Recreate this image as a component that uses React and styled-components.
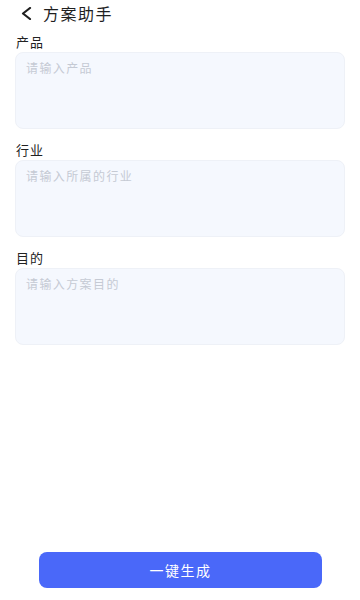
import React, { useState } from 'react';
import styled, { createGlobalStyle } from 'styled-components';

const GlobalStyle = createGlobalStyle`
  * { box-sizing: border-box; }
  html, body {
    margin: 0;
    padding: 0;
    background: #fff;
    font-family: "Noto Sans CJK SC", "Noto Sans", sans-serif;
  }
`;

const Page = styled.div`
  width: 100%;
  height: 100vh;
  display: flex;
  flex-direction: column;
  background: #fff;
`;

const Header = styled.div`
  height: 26px;
  display: flex;
  align-items: center;
  padding-left: 20px;
  gap: 10px;
`;

const BackButton = styled.button`
  border: none;
  background: none;
  padding: 0;
  width: 13px;
  height: 14px;
  display: flex;
  align-items: center;
  justify-content: center;
  cursor: pointer;
`;

const Title = styled.div`
  font-size: 16px;
  color: #1f1f1f;
  letter-spacing: 1.5px;
  line-height: 20px;
`;

const Form = styled.div`
  padding: 5px 15px 0;
  display: flex;
  flex-direction: column;
  gap: 10px;
`;

const Field = styled.div`
  display: flex;
  flex-direction: column;
`;

const Label = styled.label`
  font-size: 13px;
  line-height: 21px;
  color: #222;
  letter-spacing: 1px;
  padding-left: 1px;
`;

const Input = styled.textarea`
  height: 77px;
  width: 100%;
  resize: none;
  border: 1px solid #eef1f7;
  border-radius: 8px;
  background: #f5f8fe;
  padding: 6px 10px;
  font-family: inherit;
  font-size: 12px;
  line-height: 18px;
  letter-spacing: 1.4px;
  color: #333;
  outline: none;

  &::placeholder {
    color: #c5cad4;
  }
`;

const Submit = styled.button`
  margin: auto 38px 12px 39px;
  height: 36px;
  border: none;
  border-radius: 8px;
  background: #4a68f9;
  color: #fff;
  font-family: inherit;
  font-size: 14px;
  letter-spacing: 1.5px;
  cursor: pointer;
`;

const fields = [
  { key: 'product', label: '产品', placeholder: '请输入产品' },
  { key: 'industry', label: '行业', placeholder: '请输入所属的行业' },
  { key: 'goal', label: '目的', placeholder: '请输入方案目的' },
];

const App = () => {
  const [values, setValues] = useState({});

  return (
    <>
      <GlobalStyle />
      <Page>
        <Header>
          <BackButton aria-label="返回">
            <svg width="11" height="13" viewBox="0 0 11 13">
              <polyline
                points="9,1 2,6.5 9,12"
                fill="none"
                stroke="#1f1f1f"
                strokeWidth="2.2"
                strokeLinecap="round"
                strokeLinejoin="round"
              />
            </svg>
          </BackButton>
          <Title>方案助手</Title>
        </Header>
        <Form>
          {fields.map((f) => (
            <Field key={f.key}>
              <Label>{f.label}</Label>
              <Input
                placeholder={f.placeholder}
                value={values[f.key] || ''}
                onChange={(e) => setValues({ ...values, [f.key]: e.target.value })}
              />
            </Field>
          ))}
        </Form>
        <Submit>一键生成</Submit>
      </Page>
    </>
  );
};

export default App;
